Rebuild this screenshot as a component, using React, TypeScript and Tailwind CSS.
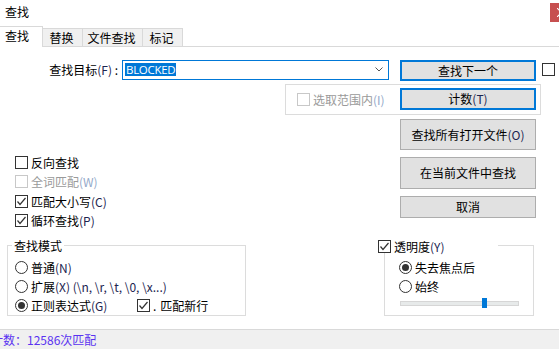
import { ReactNode } from "react";

const fontClass = "font-['Noto_Sans_CJK_SC','Noto_Sans',sans-serif]";

const Mn = ({ text, disabled }: { text: string; disabled?: boolean }) => (
  <span className={disabled ? "text-[#93a9c9]" : "text-[#1c2550]"}>{text}</span>
);

const CheckBox = ({ checked, disabled }: { checked?: boolean; disabled?: boolean }) => (
  <div
    className={`w-[13px] h-[13px] shrink-0 border bg-white flex items-center justify-center ${
      disabled ? "border-[#c8c8c8]" : "border-[#333333]"
    }`}
  >
    {checked && (
      <svg width="11" height="11" viewBox="0 0 11 11">
        <polyline points="1.5,5.5 4,8.5 9.5,2" fill="none" stroke="#333" strokeWidth="1.2" />
      </svg>
    )}
  </div>
);

const Radio = ({ selected }: { selected?: boolean }) => (
  <div className="w-[13px] h-[13px] shrink-0 rounded-full border border-[#333333] bg-white flex items-center justify-center">
    {selected && <div className="w-[7px] h-[7px] rounded-full bg-[#333333]" />}
  </div>
);

const Button = ({
  children,
  primary,
  className,
}: {
  children: ReactNode;
  primary?: boolean;
  className: string;
}) => (
  <div
    className={`${className} shrink-0 flex items-center justify-center bg-[#e1e1e1] text-black ${
      primary ? "border-2 border-[#0078d7]" : "border border-[#adadad]"
    }`}
  >
    <span className="leading-[12px]">{children}</span>
  </div>
);

const Option = ({
  control,
  children,
  className = "",
  disabled,
}: {
  control: ReactNode;
  children: ReactNode;
  className?: string;
  disabled?: boolean;
}) => (
  <div className={`flex items-center h-[13px] ${className}`}>
    {control}
    <span className={`ml-[3px] leading-[12px] whitespace-nowrap ${disabled ? "text-[#9a9a9a]" : "text-black"}`}>
      {children}
    </span>
  </div>
);

const TitleBar = () => (
  <div className="flex justify-between h-[26px] shrink-0">
    <span className="ml-[5px] mt-[6px] leading-[12px]">查找</span>
    <div className="mt-[3px] h-[19px] w-[9px] shrink-0 bg-[#c75050] relative overflow-hidden">
      <svg className="absolute left-[7px] top-[5px]" width="9" height="9" viewBox="0 0 9 9">
        <path d="M0 0 L9 9 M9 0 L0 9" stroke="white" strokeWidth="1.2" />
      </svg>
    </div>
  </div>
);

const Tabs = () => (
  <div className="flex items-end h-[21px] shrink-0 border-b border-[#d9d9d9]">
    <div className="w-[43px] h-[21px] -mb-px bg-white border-t border-r border-[#d9d9d9] flex items-center pl-[5px]">
      <span className="leading-[12px] -mt-[2px]">查找</span>
    </div>
    {[
      ["替换", "w-[40px]"],
      ["文件查找", "w-[60px]"],
      ["标记", "w-[40px]"],
    ].map(([label, w]) => (
      <div
        key={label}
        className={`${w} h-[18px] bg-[#f0f0f0] border-t border-r border-[#d9d9d9] flex items-center justify-center`}
      >
        <span className="leading-[12px] pr-[2px]">{label}</span>
      </div>
    ))}
  </div>
);

const SearchRow = () => (
  <div className="flex items-start mt-[13px]">
    <div className="w-[118px] h-[20px] flex items-center justify-end">
      <span className="leading-[12px] whitespace-nowrap -mt-[1px]">
        查找目标<Mn text="(F)" /> :
      </span>
    </div>
    <div className="ml-[4px] w-[267px] h-[20px] border border-[#0078d7] bg-white flex items-start justify-between">
      <span className="mt-[2px] ml-[2px] h-[13px] px-[1px] bg-[#0078d7] text-white leading-[13px] font-['Open_Sans',sans-serif] text-[11.5px] tracking-[-0.3px]">
        BLOCKED
      </span>
      <svg className="mt-[6px] mr-[5px]" width="8" height="5" viewBox="0 0 8 5">
        <polyline points="0.5,0.5 4,4 7.5,0.5" fill="none" stroke="#555" strokeWidth="1" />
      </svg>
    </div>
    <Button primary className="ml-[11px] w-[136px] h-[21px]">
      查找下一个
    </Button>
    <div className="ml-[6px] mt-[3px]">
      <CheckBox />
    </div>
  </div>
);

const ScopeRow = () => (
  <div className="mt-[3px] ml-[285px] w-[256px] h-[31px] border border-[#dcdcdc] flex items-start">
    <div className="w-[114px] h-full flex items-center pl-[11px]">
      <Option control={<CheckBox disabled />} disabled>
        选取范围内<Mn text="(I)" disabled />
      </Option>
    </div>
    <Button primary className="mt-[3px] w-[136px] h-[22px]">
      计数<Mn text="(T)" />
    </Button>
  </div>
);

const MiddleRows = () => (
  <div className="flex items-start mt-[7px]">
    <div className="w-[400px] -mt-px pl-[15px] flex flex-col">
      <Option control={<CheckBox />}>反向查找</Option>
      <Option control={<CheckBox disabled />} disabled className="mt-[6px]">
        全词匹配<Mn text="(W)" disabled />
      </Option>
      <Option control={<CheckBox checked />} className="mt-[7px]">
        匹配大小写<Mn text="(C)" />
      </Option>
      <Option control={<CheckBox checked />} className="mt-[6px]">
        循环查找<Mn text="(P)" />
      </Option>
    </div>
    <div className="flex flex-col">
      <Button className="w-[136px] h-[32px]">在当前文件中查找</Button>
      <Button className="mt-[7px] w-[136px] h-[22px]">取消</Button>
    </div>
  </div>
);

const ModeGroup = () => (
  <div className="ml-[7px] w-[239px] h-[71px] border border-[#dcdcdc] relative flex flex-col pl-[7px] pt-[15px]">
    <span className="absolute left-[4px] -top-[6px] px-[2px] bg-white leading-[12px]">查找模式</span>
    <Option control={<Radio />}>
      普通<Mn text="(N)" />
    </Option>
    <Option control={<Radio />} className="mt-[6px]">
      扩展<Mn text="(X) (\n, \r, \t, \0, \x...)" />
    </Option>
    <div className="flex items-center mt-[6px]">
      <Option control={<Radio selected />} className="w-[122px]">
        正则表达式<Mn text="(G)" />
      </Option>
      <Option control={<CheckBox checked />}>
        <span className="mr-[4px]">.</span>匹配新行
      </Option>
    </div>
  </div>
);

const OpacityGroup = () => (
  <div className="ml-[138px] w-[150px] h-[71px] border border-[#dcdcdc] relative flex flex-col pl-[14px] pt-[15px]">
    <div className="absolute -left-[7px] -top-[6px] w-[120px] h-[13px] bg-white flex items-center">
      <Option control={<CheckBox checked />}>
        透明度<Mn text="(Y)" />
      </Option>
    </div>
    <Option control={<Radio selected />}>失去焦点后</Option>
    <Option control={<Radio />} className="mt-[6px]">
      始终
    </Option>
    <div className="mt-[8px] ml-px w-[119px] h-[5px] bg-[#e7eaea] border border-[#d6d6d6] relative">
      <div className="absolute left-[81px] -top-[4px] w-[5px] h-[10px] bg-[#0078d7]" />
    </div>
  </div>
);

const StatusBar = () => (
  <div className="mt-auto h-[20px] shrink-0 border-t border-[#d9d9d9] bg-[#f0f0f0] flex items-center">
    <span className="-ml-[9px] leading-[12px] text-[#5a33f0] whitespace-nowrap">计数：12586次匹配</span>
  </div>
);

export default function App() {
  return (
    <div className={`w-[559px] h-[349px] overflow-hidden bg-white flex flex-col text-[12px] text-black ${fontClass}`}>
      <TitleBar />
      <Tabs />
      <div className="flex-1 flex flex-col">
        <SearchRow />
        <ScopeRow />
        <Button className="mt-[4px] ml-[400px] w-[136px] h-[31px]">
          查找所有打开文件<Mn text="(O)" />
        </Button>
        <MiddleRows />
        <div className="flex items-start mt-[18px]">
          <ModeGroup />
          <OpacityGroup />
        </div>
        <StatusBar />
      </div>
    </div>
  );
}
